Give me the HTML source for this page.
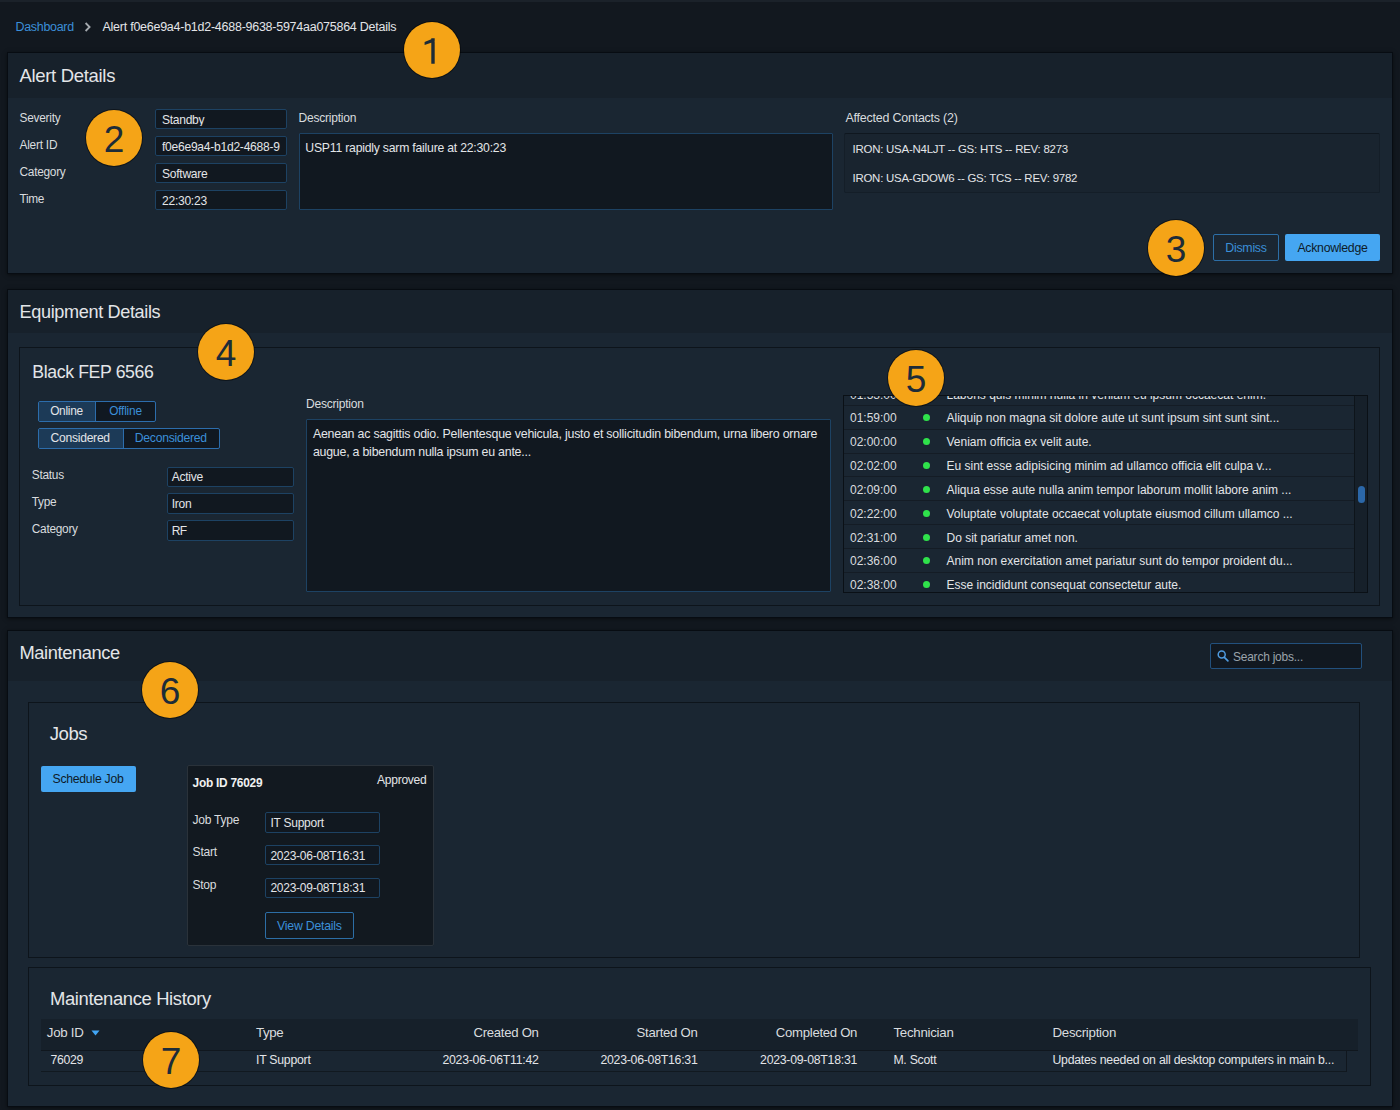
<!DOCTYPE html>
<html><head><meta charset="utf-8"><title>Alert Details</title>
<style>
html,body{margin:0;padding:0;}
body{width:1400px;height:1110px;overflow:hidden;position:relative;background:#12181f;font-family:"Liberation Sans",sans-serif;}
.a{position:absolute;}
.t{position:absolute;white-space:nowrap;line-height:1;}
.bd{position:absolute;width:56px;height:56px;border-radius:50%;background:#f5a417;box-shadow:0 0 0 1px rgba(0,0,0,0.45);color:#1d2c38;font-size:37px;line-height:59px;text-align:center;font-family:"Liberation Sans",sans-serif;}
</style></head><body>
<div class="a" style="left:0px;top:0px;width:1400px;height:2px;background:#1b222a;"></div>
<div class="t" style="left:15.5px;top:21px;font-size:12.48px;color:#3b8fd8;letter-spacing:-0.294px;">Dashboard</div>
<svg class="a" style="left:84px;top:22px" width="8" height="10" viewBox="0 0 8 10"><path d="M1.6 1 L5.6 5 L1.6 9" stroke="#a5aaaf" stroke-width="1.8" fill="none"/></svg>
<div class="t" style="left:102.5px;top:21px;font-size:12.48px;color:#e3e5e8;letter-spacing:-0.240px;">Alert f0e6e9a4-b1d2-4688-9638-5974aa075864 Details</div>
<div class="a" style="left:7px;top:52px;width:1386px;height:222px;background:#1a2632;box-sizing:border-box;border:1px solid #070c12;box-shadow:0 1px 4px rgba(0,0,0,0.5);"></div>
<div class="a" style="left:8px;top:53px;width:1384px;height:45px;background:#17212b;"></div>
<div class="t" style="left:19.5px;top:67px;font-size:18.51px;color:#e3e5e8;letter-spacing:-0.319px;">Alert Details</div>
<div class="t" style="left:19.5px;top:113px;font-size:11.86px;color:#d9dcdf;letter-spacing:-0.237px;">Severity</div>
<div class="a" style="left:155px;top:109.0px;width:132px;height:20px;background:#111820;box-sizing:border-box;border:1px solid #1d4263;border-radius:2px;"></div>
<div class="t" style="left:162px;top:114px;font-size:12.06px;color:#e3e5e8;overflow:hidden;width:120px;letter-spacing:-0.281px;">Standby</div>
<div class="t" style="left:19.5px;top:140px;font-size:11.86px;color:#d9dcdf;letter-spacing:-0.219px;">Alert ID</div>
<div class="a" style="left:155px;top:136.1px;width:132px;height:20px;background:#111820;box-sizing:border-box;border:1px solid #1d4263;border-radius:2px;"></div>
<div class="t" style="left:162px;top:141px;font-size:12.06px;color:#e3e5e8;overflow:hidden;width:120px;letter-spacing:-0.246px;">f0e6e9a4-b1d2-4688-9</div>
<div class="t" style="left:19.5px;top:167px;font-size:11.86px;color:#d9dcdf;letter-spacing:-0.267px;">Category</div>
<div class="a" style="left:155px;top:163.2px;width:132px;height:20px;background:#111820;box-sizing:border-box;border:1px solid #1d4263;border-radius:2px;"></div>
<div class="t" style="left:162px;top:168px;font-size:12.06px;color:#e3e5e8;overflow:hidden;width:120px;letter-spacing:-0.259px;">Software</div>
<div class="t" style="left:19.5px;top:194px;font-size:11.86px;color:#d9dcdf;letter-spacing:-0.335px;">Time</div>
<div class="a" style="left:155px;top:190.3px;width:132px;height:20px;background:#111820;box-sizing:border-box;border:1px solid #1d4263;border-radius:2px;"></div>
<div class="t" style="left:162px;top:195px;font-size:12.06px;color:#e3e5e8;overflow:hidden;width:120px;letter-spacing:-0.256px;">22:30:23</div>
<div class="t" style="left:298.5px;top:112px;font-size:12.06px;color:#d9dcdf;letter-spacing:-0.230px;">Description</div>
<div class="a" style="left:299px;top:133px;width:534px;height:77px;background:#111820;box-sizing:border-box;border:1px solid #1d4263;border-radius:1px;"></div>
<div class="t" style="left:305.3px;top:142px;font-size:12.22px;color:#e3e5e8;letter-spacing:-0.217px;">USP11 rapidly sarm failure at 22:30:23</div>
<div class="t" style="left:845.5px;top:112px;font-size:12.48px;color:#d9dcdf;letter-spacing:-0.225px;">Affected Contacts (2)</div>
<div class="a" style="left:844px;top:133px;width:536px;height:60px;background:#19242f;box-sizing:border-box;border:1px solid #141e28;border-radius:2px;border-top-color:#0f171f;"></div>
<div class="t" style="left:852.5px;top:144px;font-size:11.44px;color:#e3e5e8;letter-spacing:-0.227px;">IRON: USA-N4LJT -- GS: HTS -- REV: 8273</div>
<div class="t" style="left:852.5px;top:173px;font-size:11.44px;color:#e3e5e8;letter-spacing:-0.237px;">IRON: USA-GDOW6 -- GS: TCS -- REV: 9782</div>
<div class="a" style="left:1213px;top:234px;width:66px;height:27px;box-sizing:border-box;border:1px solid #2c6ea6;border-radius:2px;"></div>
<div class="t" style="left:1246px;top:242px;font-size:12.38px;color:#3b8fd8;transform:translateX(-50%);letter-spacing:-0.280px;">Dismiss</div>
<div class="a" style="left:1285px;top:234px;width:95px;height:27px;background:#45a6f2;border-radius:2px;"></div>
<div class="t" style="left:1332.5px;top:242px;font-size:12.32px;color:#0d1b29;transform:translateX(-50%);letter-spacing:-0.280px;">Acknowledge</div>
<div class="a" style="left:7px;top:289px;width:1386px;height:329px;background:#1a2632;box-sizing:border-box;border:1px solid #070c12;box-shadow:0 1px 4px rgba(0,0,0,0.5);"></div>
<div class="a" style="left:8px;top:290px;width:1384px;height:43px;background:#17212b;"></div>
<div class="t" style="left:19.5px;top:303px;font-size:18.1px;color:#e3e5e8;letter-spacing:-0.355px;">Equipment Details</div>
<div class="a" style="left:19px;top:347px;width:1361px;height:259px;box-sizing:border-box;border:1px solid #0d141b;"></div>
<div class="t" style="left:32.3px;top:364px;font-size:17.68px;color:#e3e5e8;letter-spacing:-0.374px;">Black FEP 6566</div>
<div class="a" style="left:37.5px;top:401px;width:118px;height:21px;background:#101821;box-sizing:border-box;border:1px solid #2c6dac;border-radius:2px;"></div>
<div class="a" style="left:38.5px;top:402px;width:57px;height:19px;background:#1c3a57;"></div>
<div class="a" style="left:95px;top:402px;width:1px;height:19px;background:#2c6dac;"></div>
<div class="t" style="left:66.5px;top:406px;font-size:11.86px;color:#e3e5e8;transform:translateX(-50%);letter-spacing:-0.266px;">Online</div>
<div class="t" style="left:125.5px;top:406px;font-size:11.86px;color:#3b8fd8;transform:translateX(-50%);letter-spacing:-0.220px;">Offline</div>
<div class="a" style="left:37.5px;top:428px;width:182px;height:21px;background:#101821;box-sizing:border-box;border:1px solid #2c6dac;border-radius:2px;"></div>
<div class="a" style="left:38.5px;top:429px;width:84px;height:19px;background:#1c3a57;"></div>
<div class="a" style="left:122.5px;top:429px;width:1px;height:19px;background:#2c6dac;"></div>
<div class="t" style="left:80.2px;top:432px;font-size:12.12px;color:#e3e5e8;transform:translateX(-50%);letter-spacing:-0.267px;">Considered</div>
<div class="t" style="left:170.8px;top:432px;font-size:12.2px;color:#3b8fd8;transform:translateX(-50%);letter-spacing:-0.264px;">Deconsidered</div>
<div class="t" style="left:31.8px;top:470px;font-size:11.86px;color:#d9dcdf;letter-spacing:-0.261px;">Status</div>
<div class="a" style="left:166.5px;top:466.5px;width:127px;height:20.5px;background:#111820;box-sizing:border-box;border:1px solid #1d4263;border-radius:2px;"></div>
<div class="t" style="left:171.7px;top:471px;font-size:12.06px;color:#e3e5e8;letter-spacing:-0.251px;">Active</div>
<div class="t" style="left:31.8px;top:497px;font-size:11.86px;color:#d9dcdf;letter-spacing:-0.332px;">Type</div>
<div class="a" style="left:166.5px;top:493.4px;width:127px;height:20.5px;background:#111820;box-sizing:border-box;border:1px solid #1d4263;border-radius:2px;"></div>
<div class="t" style="left:171.7px;top:498px;font-size:12.06px;color:#e3e5e8;letter-spacing:-0.264px;">Iron</div>
<div class="t" style="left:31.8px;top:524px;font-size:11.86px;color:#d9dcdf;letter-spacing:-0.267px;">Category</div>
<div class="a" style="left:166.5px;top:520.3px;width:127px;height:20.5px;background:#111820;box-sizing:border-box;border:1px solid #1d4263;border-radius:2px;"></div>
<div class="t" style="left:171.7px;top:525px;font-size:12.06px;color:#e3e5e8;letter-spacing:-0.613px;">RF</div>
<div class="t" style="left:306px;top:398px;font-size:12.06px;color:#d9dcdf;letter-spacing:-0.230px;">Description</div>
<div class="a" style="left:306px;top:419px;width:525px;height:173px;background:#111820;box-sizing:border-box;border:1px solid #1d4263;border-radius:1px;"></div>
<div class="t" style="left:312.9px;top:428px;font-size:12.38px;color:#e3e5e8;letter-spacing:-0.210px;">Aenean ac sagittis odio. Pellentesque vehicula, justo et sollicitudin bibendum, urna libero ornare</div>
<div class="t" style="left:312.9px;top:446px;font-size:12.38px;color:#e3e5e8;letter-spacing:-0.226px;">augue, a bibendum nulla ipsum eu ante...</div>
<div class="a" style="left:843px;top:395px;width:525px;height:198px;background:#1a2632;box-sizing:border-box;border:1px solid #0a1016;"></div>
<div class="a" style="left:844px;top:396px;width:510px;height:196px;overflow:hidden"><div class="t" style="left:6px;top:-7px;font-size:12px;color:#d9dcdf">01:53:00</div><div class="t" style="left:102.5px;top:-7px;font-size:12px;color:#e3e5e8">Laboris quis minim nulla in veniam eu ipsum occaecat enim.</div><div class="a" style="left:0;top:9.00px;width:510px;height:1px;background:#141c25"></div><div class="t" style="left:6px;top:16px;font-size:12px;color:#d9dcdf">01:59:00</div><div class="a" style="left:79px;top:18px;width:7px;height:7px;border-radius:50%;background:#2fe24b"></div><div class="t" style="left:102.5px;top:16px;font-size:12px;color:#e3e5e8">Aliquip non magna sit dolore aute ut sunt ipsum sint sunt sint...</div><div class="a" style="left:0;top:33.00px;width:510px;height:1px;background:#141c25"></div><div class="t" style="left:6px;top:40px;font-size:12px;color:#d9dcdf">02:00:00</div><div class="a" style="left:79px;top:42px;width:7px;height:7px;border-radius:50%;background:#2fe24b"></div><div class="t" style="left:102.5px;top:40px;font-size:12px;color:#e3e5e8">Veniam officia ex velit aute.</div><div class="a" style="left:0;top:57.00px;width:510px;height:1px;background:#141c25"></div><div class="t" style="left:6px;top:64px;font-size:12px;color:#d9dcdf">02:02:00</div><div class="a" style="left:79px;top:66px;width:7px;height:7px;border-radius:50%;background:#2fe24b"></div><div class="t" style="left:102.5px;top:64px;font-size:12px;color:#e3e5e8">Eu sint esse adipisicing minim ad ullamco officia elit culpa v...</div><div class="a" style="left:0;top:80.00px;width:510px;height:1px;background:#141c25"></div><div class="t" style="left:6px;top:88px;font-size:12px;color:#d9dcdf">02:09:00</div><div class="a" style="left:79px;top:90px;width:7px;height:7px;border-radius:50%;background:#2fe24b"></div><div class="t" style="left:102.5px;top:88px;font-size:12px;color:#e3e5e8">Aliqua esse aute nulla anim tempor laborum mollit labore anim ...</div><div class="a" style="left:0;top:104.00px;width:510px;height:1px;background:#141c25"></div><div class="t" style="left:6px;top:112px;font-size:12px;color:#d9dcdf">02:22:00</div><div class="a" style="left:79px;top:114px;width:7px;height:7px;border-radius:50%;background:#2fe24b"></div><div class="t" style="left:102.5px;top:112px;font-size:12px;color:#e3e5e8">Voluptate voluptate occaecat voluptate eiusmod cillum ullamco ...</div><div class="a" style="left:0;top:128.00px;width:510px;height:1px;background:#141c25"></div><div class="t" style="left:6px;top:136px;font-size:12px;color:#d9dcdf">02:31:00</div><div class="a" style="left:79px;top:138px;width:7px;height:7px;border-radius:50%;background:#2fe24b"></div><div class="t" style="left:102.5px;top:136px;font-size:12px;color:#e3e5e8">Do sit pariatur amet non.</div><div class="a" style="left:0;top:152.00px;width:510px;height:1px;background:#141c25"></div><div class="t" style="left:6px;top:159px;font-size:12px;color:#d9dcdf">02:36:00</div><div class="a" style="left:79px;top:161px;width:7px;height:7px;border-radius:50%;background:#2fe24b"></div><div class="t" style="left:102.5px;top:159px;font-size:12px;color:#e3e5e8">Anim non exercitation amet pariatur sunt do tempor proident du...</div><div class="a" style="left:0;top:176.00px;width:510px;height:1px;background:#141c25"></div><div class="t" style="left:6px;top:183px;font-size:12px;color:#d9dcdf">02:38:00</div><div class="a" style="left:79px;top:185px;width:7px;height:7px;border-radius:50%;background:#2fe24b"></div><div class="t" style="left:102.5px;top:183px;font-size:12px;color:#e3e5e8">Esse incididunt consequat consectetur aute.</div><div class="a" style="left:0;top:200.00px;width:510px;height:1px;background:#141c25"></div></div>
<div class="a" style="left:1354px;top:396px;width:13px;height:196px;background:#16202a;"></div>
<div class="a" style="left:1354px;top:396px;width:1px;height:196px;background:#0d141a;"></div>
<div class="a" style="left:1358px;top:486px;width:7px;height:17px;background:#2b67a8;border-radius:3.5px;"></div>
<div class="a" style="left:7px;top:630px;width:1386px;height:477px;background:#1a2632;box-sizing:border-box;border:1px solid #070c12;box-shadow:0 1px 4px rgba(0,0,0,0.5);"></div>
<div class="a" style="left:8px;top:631px;width:1384px;height:50px;background:#17212b;"></div>
<div class="t" style="left:19.5px;top:644px;font-size:18.3px;color:#e3e5e8;letter-spacing:-0.401px;">Maintenance</div>
<div class="a" style="left:1210px;top:643px;width:152px;height:26px;background:#111820;box-sizing:border-box;border:1px solid #22507d;border-radius:2px;"></div>
<svg class="a" style="left:1215px;top:648px" width="16" height="16" viewBox="0 0 16 16"><circle cx="6.7" cy="6.5" r="3.5" stroke="#4f9be0" stroke-width="1.5" fill="none"/><path d="M9.4 9.3 L12.9 12.8" stroke="#4f9be0" stroke-width="1.7" stroke-linecap="round"/></svg>
<div class="t" style="left:1233px;top:652px;font-size:11.96px;color:#9ba3ab;letter-spacing:-0.216px;">Search jobs...</div>
<div class="a" style="left:28px;top:702px;width:1332px;height:256px;box-sizing:border-box;border:1px solid #0d141b;"></div>
<div class="t" style="left:49.8px;top:725px;font-size:18.62px;color:#e3e5e8;letter-spacing:-0.507px;">Jobs</div>
<div class="a" style="left:40.5px;top:765.5px;width:95px;height:26.5px;background:#45a6f2;border-radius:2px;"></div>
<div class="t" style="left:88px;top:773px;font-size:12.24px;color:#0d1b29;transform:translateX(-50%);letter-spacing:-0.259px;">Schedule Job</div>
<div class="a" style="left:187px;top:765px;width:247px;height:181px;background:#121920;box-sizing:border-box;border:1px solid #2a323a;border-radius:2px;"></div>
<div class="t" style="left:192.6px;top:778px;font-size:11.91px;color:#f0f1f2;font-weight:700;letter-spacing:-0.256px;">Job ID 76029</div>
<div class="t" style="right:973.6px;text-align:right;top:774px;font-size:12.06px;color:#e3e5e8;letter-spacing:-0.281px;">Approved</div>
<div class="t" style="left:192.6px;top:814px;font-size:12.06px;color:#d9dcdf;letter-spacing:-0.265px;">Job Type</div>
<div class="a" style="left:264.5px;top:812.0px;width:115px;height:20.5px;background:#111820;box-sizing:border-box;border:1px solid #1d4263;border-radius:2px;"></div>
<div class="t" style="left:270.4px;top:817px;font-size:12.01px;color:#e3e5e8;letter-spacing:-0.238px;">IT Support</div>
<div class="t" style="left:192.6px;top:846px;font-size:12.06px;color:#d9dcdf;letter-spacing:-0.243px;">Start</div>
<div class="a" style="left:264.5px;top:844.8px;width:115px;height:20.5px;background:#111820;box-sizing:border-box;border:1px solid #1d4263;border-radius:2px;"></div>
<div class="t" style="left:270.4px;top:850px;font-size:12.01px;color:#e3e5e8;letter-spacing:-0.252px;">2023-06-08T16:31</div>
<div class="t" style="left:192.6px;top:879px;font-size:12.06px;color:#d9dcdf;letter-spacing:-0.315px;">Stop</div>
<div class="a" style="left:264.5px;top:877.6px;width:115px;height:20.5px;background:#111820;box-sizing:border-box;border:1px solid #1d4263;border-radius:2px;"></div>
<div class="t" style="left:270.4px;top:882px;font-size:12.01px;color:#e3e5e8;letter-spacing:-0.252px;">2023-09-08T18:31</div>
<div class="a" style="left:265px;top:912px;width:89px;height:27px;box-sizing:border-box;border:1px solid #2c6ea6;border-radius:2px;"></div>
<div class="t" style="left:309.4px;top:920px;font-size:12.32px;color:#3b8fd8;transform:translateX(-50%);letter-spacing:-0.234px;">View Details</div>
<div class="a" style="left:28px;top:967px;width:1343px;height:119px;box-sizing:border-box;border:1px solid #0d141b;"></div>
<div class="t" style="left:50px;top:990px;font-size:18.41px;color:#e3e5e8;letter-spacing:-0.360px;">Maintenance History</div>
<div class="a" style="left:40.5px;top:1018.5px;width:1317.5px;height:31.5px;background:#16202a;"></div>
<div class="a" style="left:40.5px;top:1049.5px;width:1317.5px;height:1px;background:#10171e;"></div>
<div class="a" style="left:40.5px;top:1071px;width:1306px;height:1px;background:#111920;"></div>
<div class="a" style="left:1346px;top:1050px;width:1px;height:22px;background:#10171e;"></div>
<div class="t" style="left:46.8px;top:1026px;font-size:13.31px;color:#d9dcdf;letter-spacing:-0.295px;">Job ID</div>
<svg class="a" style="left:91px;top:1030px" width="9" height="6" viewBox="0 0 9 6"><path d="M0.5 0.5 L8.5 0.5 L4.5 5.5 Z" fill="#42a6f5"/></svg>
<div class="t" style="left:256px;top:1026px;font-size:13.31px;color:#d9dcdf;letter-spacing:-0.369px;">Type</div>
<div class="t" style="right:861.4px;text-align:right;top:1026px;font-size:13.16px;color:#d9dcdf;letter-spacing:-0.293px;">Created On</div>
<div class="t" style="right:702.5px;text-align:right;top:1026px;font-size:13.16px;color:#d9dcdf;letter-spacing:-0.274px;">Started On</div>
<div class="t" style="right:542.9px;text-align:right;top:1026px;font-size:13.16px;color:#d9dcdf;letter-spacing:-0.299px;">Completed On</div>
<div class="t" style="left:893.4px;top:1026px;font-size:13.31px;color:#d9dcdf;letter-spacing:-0.268px;">Technician</div>
<div class="t" style="left:1052.4px;top:1026px;font-size:13.31px;color:#d9dcdf;letter-spacing:-0.255px;">Description</div>
<div class="t" style="left:50.6px;top:1054px;font-size:12.27px;color:#e3e5e8;letter-spacing:-0.327px;">76029</div>
<div class="t" style="left:256px;top:1054px;font-size:12.27px;color:#e3e5e8;letter-spacing:-0.243px;">IT Support</div>
<div class="t" style="right:861.4px;text-align:right;top:1054px;font-size:12.31px;color:#e3e5e8;letter-spacing:-0.255px;">2023-06-06T11:42</div>
<div class="t" style="right:702.5px;text-align:right;top:1054px;font-size:12.31px;color:#e3e5e8;letter-spacing:-0.258px;">2023-06-08T16:31</div>
<div class="t" style="right:542.9px;text-align:right;top:1054px;font-size:12.31px;color:#e3e5e8;letter-spacing:-0.258px;">2023-09-08T18:31</div>
<div class="t" style="left:893.4px;top:1054px;font-size:12.27px;color:#e3e5e8;letter-spacing:-0.246px;">M. Scott</div>
<div class="t" style="left:1052.4px;top:1054px;font-size:12.28px;color:#e3e5e8;letter-spacing:-0.220px;">Updates needed on all desktop computers in main b...</div>
<div class="bd" style="left:404.0px;top:22.0px;"><svg width="56" height="56" viewBox="0 0 56 56" style="position:absolute;left:0;top:0"><path d="M27.3 16.3 L30.7 16.3 L30.7 41.8 L27.3 41.8 Z M30.7 16.3 L30.7 19.4 L20.6 23.1 L20.6 20.0 L29.6 16.3 Z" fill="#1d2c38"/></svg></div>
<div class="bd" style="left:86.0px;top:110.0px;">2</div>
<div class="bd" style="left:1148.0px;top:219.8px;">3</div>
<div class="bd" style="left:198.0px;top:324.0px;">4</div>
<div class="bd" style="left:888.0px;top:349.7px;">5</div>
<div class="bd" style="left:142.0px;top:662.0px;">6</div>
<div class="bd" style="left:143.0px;top:1032.0px;">7</div>
</body></html>
